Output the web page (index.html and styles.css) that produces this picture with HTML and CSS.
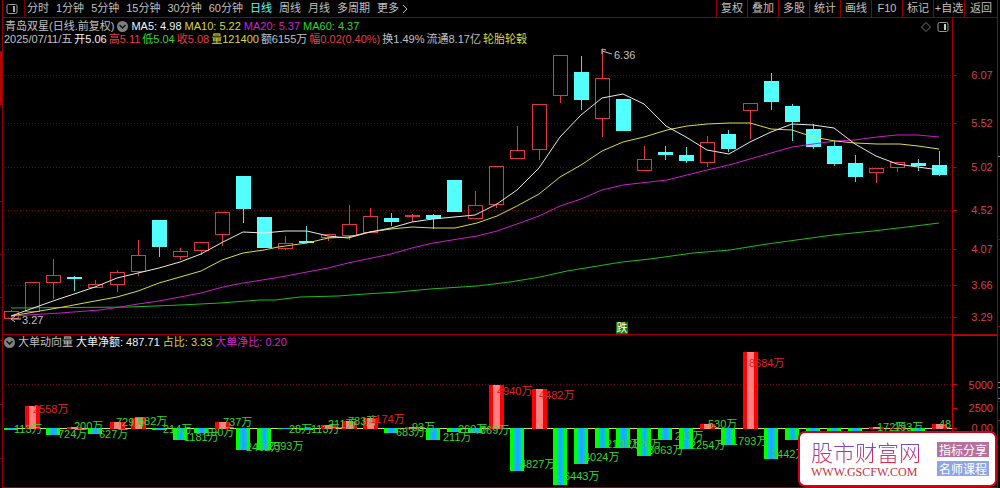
FILE: index.html
```html
<!DOCTYPE html>
<html lang="zh-CN">
<head>
<meta charset="utf-8">
<title>青岛双星 日线</title>
<link rel="stylesheet" href="styles.css">
</head>
<body>
<div class="app">
  <svg class="edge" viewBox="0 0 2 488" preserveAspectRatio="none" aria-hidden="true">
    <rect class="edge-thumb" x="0" y="51" width="2" height="54"/>
    <path class="edge-tick" d="M0 201.5H2M0 254.5H2M0 297.5H2M0 340.5H2M0 404.5H2M0 458.5H2"/>
  </svg>
  <main class="main">
    <header class="bar">
      <button class="layout-btn" type="button" aria-label="布局">
        <svg width="12" height="12" viewBox="0 0 12 12"><rect x="1" y="1.500" width="10" height="9" rx="1.500" fill="none" stroke="#999"/><rect x="7" y="3" width="2" height="6" fill="#aaa"/></svg>
      </button>
      <nav class="periods">
        <button type="button">分时</button>
        <button type="button">1分钟</button>
        <button type="button">5分钟</button>
        <button type="button">15分钟</button>
        <button type="button">30分钟</button>
        <button type="button">60分钟</button>
        <button type="button" class="active">日线</button>
        <button type="button">周线</button>
        <button type="button">月线</button>
        <button type="button">多周期</button>
        <button type="button" class="more">更多<svg width="6" height="10" viewBox="0 0 6 10"><path d="M1 1L5 5L1 9" fill="none" stroke="#c0c0c0"/></svg></button>
      </nav>
      <div class="tools">
        <button type="button">复权</button>
        <button type="button">叠加</button>
        <button type="button">多股</button>
        <button type="button">统计</button>
        <button type="button">画线</button>
        <button type="button">F10</button>
        <button type="button">标记</button>
        <button type="button">+自选</button>
        <button type="button">返回</button>
      </div>
    </header>

    <section class="panel">
      <div class="plot">
        <div class="info">
          <div class="line averages">
            <span class="name">青岛双星(日线.前复权)</span>
            <button class="fold" type="button" aria-label="展开"><svg width="11" height="11" viewBox="0 0 11 11"><circle cx="5.500" cy="5.500" r="5.500" fill="#808080"/><path d="M2.500 4L5.500 7L8.500 4" fill="none" stroke="#111" stroke-width="1.500"/></svg></button>
            <span class="white">MA5: 4.98</span>
            <span class="yellow">MA10: 5.22</span>
            <span class="magenta">MA20: 5.37</span>
            <span class="green">MA60: 4.37</span>
            <span class="corner">
              <svg width="10" height="10" viewBox="0 0 10 10"><path d="M5 .5L9.500 5L5 9.500L.5 5Z" fill="none" stroke="#777"/></svg>
              <svg width="12" height="12" viewBox="0 0 12 12"><rect x="1" y="1.500" width="10" height="9" rx="1.500" fill="none" stroke="#999"/><rect x="7" y="3" width="2" height="6" fill="#ccc"/></svg>
            </span>
          </div>
          <div class="line quote">
            <span>2025/07/11/五</span>
            <span class="white">开5.06</span>
            <span class="red">高5.11</span>
            <span class="green">低5.04</span>
            <span class="red">收5.08</span>
            <span class="yellow">量121400</span>
            <span>额6155万</span>
            <span class="red">幅0.02(0.40%)</span>
            <span>换1.49%</span>
            <span>流通8.17亿</span>
            <span class="yellow">轮胎轮毂</span>
          </div>
        </div>
        <svg class="chart" id="price" viewBox="3 46 949 288" role="img" aria-label="日线K线图"></svg>
      </div>
      <svg class="axis" id="price-axis" viewBox="952 18 45 316"></svg>
    </section>

    <section class="panel volume">
      <div class="plot">
        <div class="line flow">
          <button class="fold" type="button" aria-label="展开"><svg width="11" height="11" viewBox="0 0 11 11"><circle cx="5.500" cy="5.500" r="5.500" fill="#808080"/><path d="M2.500 4L5.500 7L8.500 4" fill="none" stroke="#111" stroke-width="1.500"/></svg></button>
          <span>大单动向量</span>
          <span class="white">大单净额: 487.71</span>
          <span class="yellow">占比: 3.33</span>
          <span class="magenta">大单净比: 0.20</span>
        </div>
        <svg class="chart" id="flow" viewBox="3 349 949 138" role="img" aria-label="大单动向量"></svg>
      </div>
      <svg class="axis" id="flow-axis" viewBox="952 335 45 152"></svg>
    </section>

    <aside class="stamp">
      <div class="brand">
        <div class="brand-name">股市财富网</div>
        <div class="brand-url">WWW.GSCFW.COM</div>
      </div>
      <div class="tags">
        <span class="tag rose">指标分享</span>
        <span class="tag blue">名师课程</span>
      </div>
    </aside>
  </main>
  <svg class="edge right" viewBox="0 0 2 488" preserveAspectRatio="none" aria-hidden="true">
    <path class="edge-tick" d="M0 239.500H2M0 326.500H2M0 401.500H2M0 420.500H2"/>
    <path class="edge-mark" d="M0 156.500H2M0 382.500H2M0 387.500H2M0 398.500H2"/>
  </svg>
</div>
<script src="chart.js"></script>
</body>
</html>
```
FILE: styles.css
```css
* { box-sizing: border-box; }

body {
  margin: 0;
  background: #000;
  color: #c0c0c0;
  font-family: "Liberation Sans", "Noto Sans CJK SC", sans-serif;
  font-size: 11px;
  line-height: 13px;
}

button {
  margin: 0;
  padding: 0;
  border: 0;
  background: none;
  color: inherit;
  font: inherit;
  white-space: nowrap;
}

svg { display: block; }

.app {
  display: grid;
  grid-template-columns: 2px 1fr 2px;
  overflow: hidden;
}

.main {
  position: relative;
  min-width: 0;
  border-left: 1px solid #900000;
  border-right: 1px solid #a00000;
}

.edge { width: 2px; height: 100%; }
.edge-thumb { fill: #c00000; }
.edge-tick { stroke: #800000; }
.edge-mark { stroke: #888; }

.bar {
  display: flex;
  height: 18px;
  border-bottom: 1px solid #900000;
}

.layout-btn {
  display: flex;
  align-items: center;
  width: 22px;
  padding-left: 3px;
  border-right: 1px solid #700000;
}

.periods {
  display: flex;
  flex: 1;
  align-items: center;
  gap: 7px;
  padding-left: 2px;
}

.periods .active { color: #54ffff; }

.more {
  display: flex;
  align-items: center;
  gap: 3px;
}

.tools { display: flex; }

.tools button {
  width: 31px;
  border-left: 1px solid #900000;
}

.tools button:last-child { width: 33px; }

.panel {
  display: grid;
  grid-template-columns: 1fr 45px;
  border-bottom: 1px solid #a00000;
}

.plot { min-width: 0; }

.info { height: 28px; padding-top: 2px; }

.line {
  display: flex;
  align-items: center;
  height: 13px;
  white-space: nowrap;
}

.averages { gap: 3px; padding-left: 2px; }
.quote { gap: 2px; padding-left: 1px; }
.flow { gap: 3px; height: 14px; padding-left: 1px; }

.corner {
  display: flex;
  align-items: center;
  gap: 6px;
  margin-left: auto;
  padding-right: 3px;
}

.white { color: #f4f4f4; }
.red { color: #e63c46; }
.green { color: #2ed82e; }
.yellow { color: #d8d838; }
.magenta { color: #d020d0; }

.chart {
  width: 100%;
  height: auto;
  overflow: hidden;
}

.axis {
  width: 45px;
  height: 100%;
}

.grid { stroke: #780000; stroke-dasharray: 1 2; }
.axis-line { stroke: #a00000; fill: none; }
.volume .axis-line { stroke: #d00000; }
.axis-text { fill: #dc3c44; text-anchor: middle; }
.axis-text.end { text-anchor: end; }

.up { fill: none; stroke: #dc3840; }
.down { fill: #54ffff; stroke: none; }
.down-wick { stroke: #54d8d8; }

.ma { fill: none; stroke-width: 1; }
.ma5 { stroke: #e8e8e8; }
.ma10 { stroke: #dcdc3c; }
.ma20 { stroke: #cc1ccc; }
.ma60 { stroke: #1cbc1c; }

.note { fill: #c0c0c0; }
.note-arrow { fill: none; stroke: #c0c0c0; }
.fall-box { fill: #087808; }
.fall-text { fill: #fff; text-anchor: middle; }

.zero { stroke: #dcdc50; }
.bar-red { fill: #f00; }
.bar-pink { fill: #ff8080; }
.bar-green { fill: #0f0; }
.bar-teal { fill: #00c8dc; }
.bar-blue { fill: #20a8ff; }
.flow-green { fill: #30d830; }
.flow-red { fill: #e02028; }

.stamp {
  position: absolute;
  right: 0;
  bottom: 1px;
  display: flex;
  align-items: center;
  justify-content: space-between;
  width: 199px;
  height: 56px;
  padding: 0 6px 0 11px;
  border: 2px solid #d00018;
  border-radius: 7px;
  background: #fff;
}

.brand-name {
  background: linear-gradient(#5858e8 10%, #a83898 50%, #e02848 90%);
  background-clip: text;
  color: transparent;
  font-family: "Noto Sans CJK SC", sans-serif;
  font-size: 22px;
  font-weight: 300;
  line-height: 26px;
}

.brand-url {
  color: #c83040;
  font-family: "Liberation Serif", serif;
  font-size: 12px;
  line-height: 16px;
}

.tags { display: grid; gap: 4px; }

.tag {
  padding: 0 2px;
  color: #fff;
  font-family: "Noto Sans CJK SC", sans-serif;
  font-size: 12px;
  line-height: 15px;
}

.rose { background: #b8709c; }
.blue { background: #90a4e4; }
```
FILE: chart.js
```js
const NS = "http://www.w3.org/2000/svg";
const x = i => Math.round(11 + 21.1 * i) + 0.5;

function add(parent, tag, attrs, text) {
  const node = document.createElementNS(NS, tag);
  for (const key in attrs) node.setAttribute(key, attrs[key]);
  if (text) node.textContent = text;
  parent.appendChild(node);
}

const price = document.getElementById("price");
const flow = document.getElementById("flow");
const priceAxis = document.getElementById("price-axis");
const flowAxis = document.getElementById("flow-axis");

const levels = [[75, "6.07"], [123, "5.52"], [167, "5.02"], [210, "4.52"], [249, "4.07"], [285, "3.66"], [317, "3.29"]];
add(priceAxis, "path", { class: "axis-line", d: "M952.5 18V334" });
for (const [y, label] of levels) {
  add(price, "path", { class: "grid", d: `M5 ${y + 0.5}H952` });
  add(priceAxis, "path", { class: "axis-line", d: `M952 ${y + 0.5}H957` });
  add(priceAxis, "text", { class: "axis-text", x: 982, y: y + 4 }, label);
}

// direction, body top, body bottom, high, low
const candles = [
  ["u", 311, 318, 310, 318], ["u", 282, 311, 282, 311], ["u", 275, 282, 259, 299], ["d", 277, 279, 276, 291],
  ["u", 284, 287, 280, 287], ["u", 272, 284, 270, 292], ["u", 255, 271, 240, 276], ["d", 220, 247, 220, 257],
  ["u", 251, 256, 248, 260], ["u", 242, 250, 242, 255], ["u", 212, 234, 212, 246], ["d", 176, 209, 176, 223],
  ["d", 217, 248, 217, 248], ["u", 243, 248, 236, 250], ["d", 241, 243, 226, 243], ["u", 234, 237, 234, 241],
  ["u", 224, 235, 205, 240], ["u", 216, 232, 208, 232], ["d", 218, 222, 213, 226], ["u", 215, 216, 214, 222],
  ["d", 215, 219, 214, 229], ["d", 180, 212, 180, 212], ["u", 205, 218, 191, 218], ["u", 166, 204, 166, 208],
  ["u", 150, 158, 126, 158], ["u", 104, 149, 104, 160], ["u", 55, 95, 55, 103], ["d", 72, 100, 56, 110],
  ["u", 78, 118, 50, 137], ["d", 99, 131, 99, 131], ["u", 159, 170, 146, 170], ["d", 152, 155, 146, 160],
  ["d", 155, 161, 147, 163], ["u", 142, 162, 136, 167], ["d", 134, 149, 130, 152], ["u", 103, 110, 103, 139],
  ["d", 81, 102, 73, 110], ["d", 106, 122, 104, 141], ["d", 129, 147, 124, 149], ["d", 146, 164, 140, 166],
  ["d", 163, 177, 155, 182], ["u", 168, 172, 168, 183], ["u", 162, 167, 162, 172], ["d", 163, 166, 159, 171],
  ["d", 165, 175, 151, 176]
];
candles.forEach(([dir, top, bottom, high, low], i) => {
  const c = x(i);
  if (dir === "u") {
    add(price, "path", { class: "up", d: `M${c} ${high}V${top}M${c} ${bottom}V${low}` });
    add(price, "rect", { class: "up", x: c - 7, y: top + 0.5, width: 14, height: bottom - top });
  } else {
    add(price, "path", { class: "down-wick", d: `M${c} ${high}V${low}` });
    add(price, "rect", { class: "down", x: c - 7.5, y: top, width: 15, height: bottom - top });
  }
});

const averages = {
  ma60: "11,308 130,307 180,305 220,303 260,300 275,300 300,297 338,296 365,294 398,292 430,289 477,286 510,282 540,277 567,271 622,262 650,259 693,253 730,250 767,244 833,235 873,231 907,227 939,223",
  ma20: "11,316 60,313 100,310 120,307 138,304 159,301 180,297 201,293 223,287 243,283 275,278 307,272 328,268 348,263 391,254 412,248 433,243 477,236 497,231 517,224 539,216 560,206 581,199 602,190 623,185 667,180 687,175 707,170 729,165 750,159 771,153 792,147 813,144 835,141 855,140 877,137 897,135 918,135 939,137",
  ma10: "11,316 63,307 95,301 117,297 138,291 159,283 180,277 201,271 222,260 243,253 264,250 278,247 307,243 328,238 348,237 370,232 391,229 412,227 433,228 455,228 477,223 497,216 517,206 539,194 560,177 581,165 602,151 623,142 644,137 667,130 687,126 707,124 729,123 750,123 771,129 792,130 813,137 835,141 855,143 877,144 900,144 918,146 939,149",
  ma5: "11,316 53,301 74,294 95,287 117,278 138,273 159,268 180,262 201,254 223,242 243,232 264,233 285,231 307,231 328,236 348,238 370,232 391,228 412,222 433,219 454,217 475,215 497,204 517,190 539,168 560,137 581,115 602,98 623,94 644,104 666,126 686,137 707,150 729,154 750,142 771,132 792,124 813,125 834,128 855,144 876,156 897,164 918,167 939,170"
};
for (const name in averages) {
  add(price, "polyline", { class: `ma ${name}`, points: averages[name] });
}

add(price, "path", { class: "note-arrow", d: "M602 51L612 54M602 54V49L606 50M11 319H21M15 316L11 319L15 322" });
add(price, "text", { class: "note", x: 614, y: 59 }, "6.36");
add(price, "text", { class: "note", x: 22, y: 324 }, "3.27");
add(price, "rect", { class: "fall-box", x: 616, y: 322, width: 12, height: 12 });
add(price, "text", { class: "fall-text", x: 622, y: 332 }, "跌");

add(flow, "path", { class: "grid", d: "M5 384.5H952" });
add(flowAxis, "path", { class: "axis-line", d: "M952.5 335V487M952 335.5H997M952 384.5H957M952 408.5H957M952 428.5H957" });
for (const [y, label] of [[389, "5000"], [412, "2500"], [432, "0.00"]]) {
  add(flowAxis, "text", { class: "axis-text end", x: 993, y }, label);
}

// bar end, label, label x, label baseline
const bars = [
  [430, "113万", 14, 433], [406, "2558万", 33, 413], [435, "724万", 58, 438], [427, "200万", 74, 430],
  [434, "627万", 99, 438], [422, "729万", 116, 426], [418, "882万", 138, 425], [430, "214万", 163, 433],
  [440, "1181万", 184, 441], [433, "190万", 205, 436], [422, "737万", 223, 426], [450, "2462万", 246, 451],
  [450, "2393万", 268, 450], [429, "28万", 289, 433], [430, "113万", 311, 433], [425, "211万", 328, 428],
  [421, "783万", 348, 425], [418, "1174万", 370, 423], [433, "683万", 396, 436], [427, "93万", 412, 431],
  [440, "211万", 443, 441], [432, "260万", 458, 433], [433, "769万", 480, 434], [385, "4940万", 497, 395],
  [471, "4827万", 520, 468], [389, "4482万", 539, 399], [485, "6443万", 564, 480], [464, "4024万", 584, 461],
  [448, "2132万", 606, 448], [448, "2120万", 626, 448], [456, "3063万", 648, 454], [440, "211万", 675, 440],
  [449, "2254万", 690, 449], [424, "530万", 708, 428], [445, "1793万", 732, 445], [352, "8684万", 749, 367],
  [459, "3442万", 771, 458], [440], [431], [431], [431], [427, "172万", 877, 431], [428], [431, "193万", 894, 431],
  [424, "48", 939, 428]
];
add(flow, "path", { class: "zero", d: "M4 428.5H952" });
bars.forEach(([end], i) => {
  const left = x(i) - 7.5;
  if (end < 429) {
    add(flow, "rect", { class: "bar-red", x: left, y: end, width: 15, height: 429 - end });
    add(flow, "rect", { class: "bar-pink", x: left + 4, y: end, width: 7, height: 429 - end });
  } else {
    add(flow, "rect", { class: "bar-green", x: left, y: 428, width: 14, height: end - 428 });
    add(flow, "rect", { class: "bar-teal", x: left + 4, y: 428, width: 7, height: end - 428 });
    add(flow, "rect", { class: "bar-blue", x: left + 6, y: 428, width: 3, height: end - 428 });
  }
});
const redLabels = [1, 17, 23, 25, 35];
bars.forEach(([, label, left, base], i) => {
  if (!label) return;
  add(flow, "text", { class: redLabels.includes(i) ? "flow-red" : "flow-green", x: left, y: base }, label);
});
```
